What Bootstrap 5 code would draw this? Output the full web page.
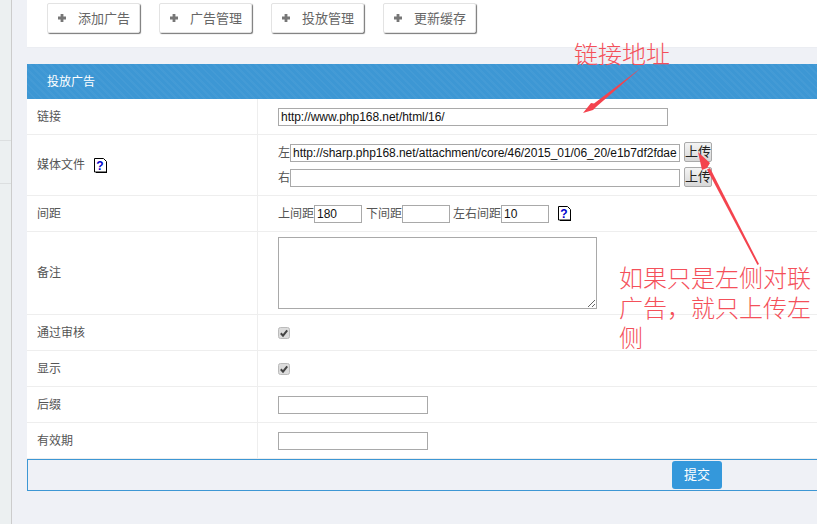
<!DOCTYPE html>
<html lang="zh">
<head>
<meta charset="utf-8">
<title>投放广告</title>
<link href="https://cdn.jsdelivr.net/npm/bootstrap@5.3.0/dist/css/bootstrap.min.css" rel="stylesheet">
<style>
html,body{height:524px;overflow:hidden}
body{background:#eff1f6;font:12px/1.5 "Liberation Sans","Noto Sans CJK SC",sans-serif;color:#555;position:relative}
.rail{width:12px;flex:none;background:#ecf0f1;border-right:1px solid #ccc;height:524px;position:relative}
.rail i{display:block;height:1px;background:#dcdfe0;position:absolute;left:0;right:0}
.main-area{padding-left:15px;min-width:0;flex:1}
.tool-panel{background:#fff;height:48px;padding:3px 0 0 20px;gap:19px;border-bottom:1px solid #ebedf2}
.tool-btn{width:93px;height:30px;background:#fff;border:1px solid #e3e3e3;border-radius:2px;box-shadow:1px 1px 1px #777;font-size:13px;color:#666;padding:0 0 0 9px;gap:11px;line-height:1}
.tool-btn svg{flex:none}
.head-bar{margin-top:16px;height:35px;line-height:36px;padding-left:20px;color:#fff;background-color:#3d97d4;background-image:repeating-linear-gradient(45deg,rgba(255,255,255,.035) 0 2px,transparent 2px 5px)}
.form-row{background:#fff;border-bottom:1px solid #eee;align-items:center}
.label-cell{width:231px;flex:none;padding-left:10px;border-right:1px solid #eee;align-self:stretch;display:flex;align-items:center;gap:9px}
.value-cell{padding-left:20px;flex:1;color:#555;font-size:12px}
.media-cell{align-self:flex-start;padding-top:7px;gap:5px}
.h36{height:36px}.h61{height:61px}.h83{height:83px}
.plain{border:1px solid #a9a9a9;background:#fff;height:18px;padding:0 1px 0 2px;font:12px "Liberation Sans",sans-serif;letter-spacing:-.04px;color:#111;display:block;border-radius:0;outline:0}
.w390{width:390px}.w48{width:48px}.w150{width:150px}
.up-btn{width:28px;height:20px;font-size:13px;line-height:18px;padding:0;color:#222;background:linear-gradient(#f4f4f4,#d8d8d8);border:1px solid #aaa;border-radius:2px;margin-left:4px}
.memo{width:319px;height:72px;border:1px solid #a9a9a9;display:block;border-radius:0;outline:0}
.tick{width:12px;height:12px;display:block}
.foot-bar{height:32px;margin-top:0;border:1px solid #3d97d4;border-right:0;background:#eff1f6;padding-left:644px;padding-top:1px}
.send-btn{width:50px;height:28px;background:#3498db;color:#fff;border:0;border-radius:3px;font-size:13px;padding:0}
.note{position:absolute;color:#f4505a;font-size:24px;line-height:30px;font-family:"Noto Sans CJK SC",sans-serif;font-weight:300}
.overlay{position:absolute;left:0;top:0;pointer-events:none}
.gap3{margin-left:3px}
.help-gap{margin-left:9px}
</style>
</head>
<body>
<div class="d-flex">
  <div class="rail"><i style="top:140px"></i><i style="top:183px"></i></div>
  <div class="main-area">
    <div class="tool-panel d-flex align-items-start">
      <button class="tool-btn d-flex align-items-center" type="button"><svg width="10" height="10" viewBox="0 0 10 10"><path d="M5 1v8M1 5h8" stroke="#777" stroke-width="2.800"/></svg>添加广告</button>
      <button class="tool-btn d-flex align-items-center" type="button"><svg width="10" height="10" viewBox="0 0 10 10"><path d="M5 1v8M1 5h8" stroke="#777" stroke-width="2.800"/></svg>广告管理</button>
      <button class="tool-btn d-flex align-items-center" type="button"><svg width="10" height="10" viewBox="0 0 10 10"><path d="M5 1v8M1 5h8" stroke="#777" stroke-width="2.800"/></svg>投放管理</button>
      <button class="tool-btn d-flex align-items-center" type="button"><svg width="10" height="10" viewBox="0 0 10 10"><path d="M5 1v8M1 5h8" stroke="#777" stroke-width="2.800"/></svg>更新缓存</button>
    </div>
    <div class="head-bar">投放广告</div>

    <div class="form-row d-flex h36">
      <div class="label-cell">链接</div>
      <div class="value-cell"><input class="plain w390" value="http://www.php168.net/html/16/"></div>
    </div>
    <div class="form-row d-flex h61">
      <div class="label-cell">媒体文件
        <svg width="13" height="15" viewBox="0 0 13 15"><path d="M.5.5h9l3 3v10.500h-12z" fill="#fff" stroke="#000"/><path d="M12.500 4v11M2 14.500h11" stroke="#000"/><text x="6" y="12" font-size="12" font-weight="700" text-anchor="middle" fill="#00c" font-family="Liberation Sans">?</text></svg>
      </div>
      <div class="value-cell media-cell d-flex flex-column">
        <div class="d-flex align-items-end">左<input class="plain w390" value="http://sharp.php168.net/attachment/core/46/2015_01/06_20/e1b7df2fdae"><button class="up-btn" type="button">上传</button></div>
        <div class="d-flex align-items-end">右<input class="plain w390"><button class="up-btn" type="button">上传</button></div>
      </div>
    </div>
    <div class="form-row d-flex h36">
      <div class="label-cell">间距</div>
      <div class="value-cell d-flex align-items-center">上间距<input class="plain w48" value="180"><span class="ms-1">下间距</span><input class="plain w48"><span class="gap3">左右间距</span><input class="plain w48" value="10">
        <svg class="help-gap" width="13" height="15" viewBox="0 0 13 15"><path d="M.5.5h9l3 3v10.500h-12z" fill="#fff" stroke="#000"/><path d="M12.500 4v11M2 14.500h11" stroke="#000"/><text x="6" y="12" font-size="12" font-weight="700" text-anchor="middle" fill="#00c" font-family="Liberation Sans">?</text></svg>
      </div>
    </div>
    <div class="form-row d-flex h83">
      <div class="label-cell">备注</div>
      <div class="value-cell"><textarea class="memo"></textarea></div>
    </div>
    <div class="form-row d-flex h36">
      <div class="label-cell">通过审核</div>
      <div class="value-cell"><svg class="tick" viewBox="0 0 12 12"><rect x=".5" y=".5" width="11" height="11" rx="2" fill="#dcdcdc" stroke="#bbb"/><path d="M2.800 6.300l2.200 2.400 4.200-5.400" fill="none" stroke="#444" stroke-width="2"/></svg></div>
    </div>
    <div class="form-row d-flex h36">
      <div class="label-cell">显示</div>
      <div class="value-cell"><svg class="tick" viewBox="0 0 12 12"><rect x=".5" y=".5" width="11" height="11" rx="2" fill="#dcdcdc" stroke="#bbb"/><path d="M2.800 6.300l2.200 2.400 4.200-5.400" fill="none" stroke="#444" stroke-width="2"/></svg></div>
    </div>
    <div class="form-row d-flex h36">
      <div class="label-cell">后缀</div>
      <div class="value-cell"><input class="plain w150"></div>
    </div>
    <div class="form-row d-flex h36">
      <div class="label-cell">有效期</div>
      <div class="value-cell"><input class="plain w150"></div>
    </div>
    <div class="foot-bar"><button class="send-btn" type="button">提交</button></div>
  </div>
</div>

<div class="note" style="left:574px;top:38px">链接地址</div>
<div class="note" style="left:619px;top:262px;width:198px">如果只是左侧对联广告，就只上传左侧</div>
<svg class="overlay" width="817" height="524" viewBox="0 0 817 524">
  <path d="M641.500 67.500L596 107 593 110 583 113 591 103 594 103.500Z" fill="#f4434e"/>
  <path d="M759 264L710 168 707 169.500 757.500 265Z" fill="#f4434e"/>
  <path d="M698 152L710 163 707 168 702 170Z" fill="#f4434e"/>
</svg>
</body>
</html>
